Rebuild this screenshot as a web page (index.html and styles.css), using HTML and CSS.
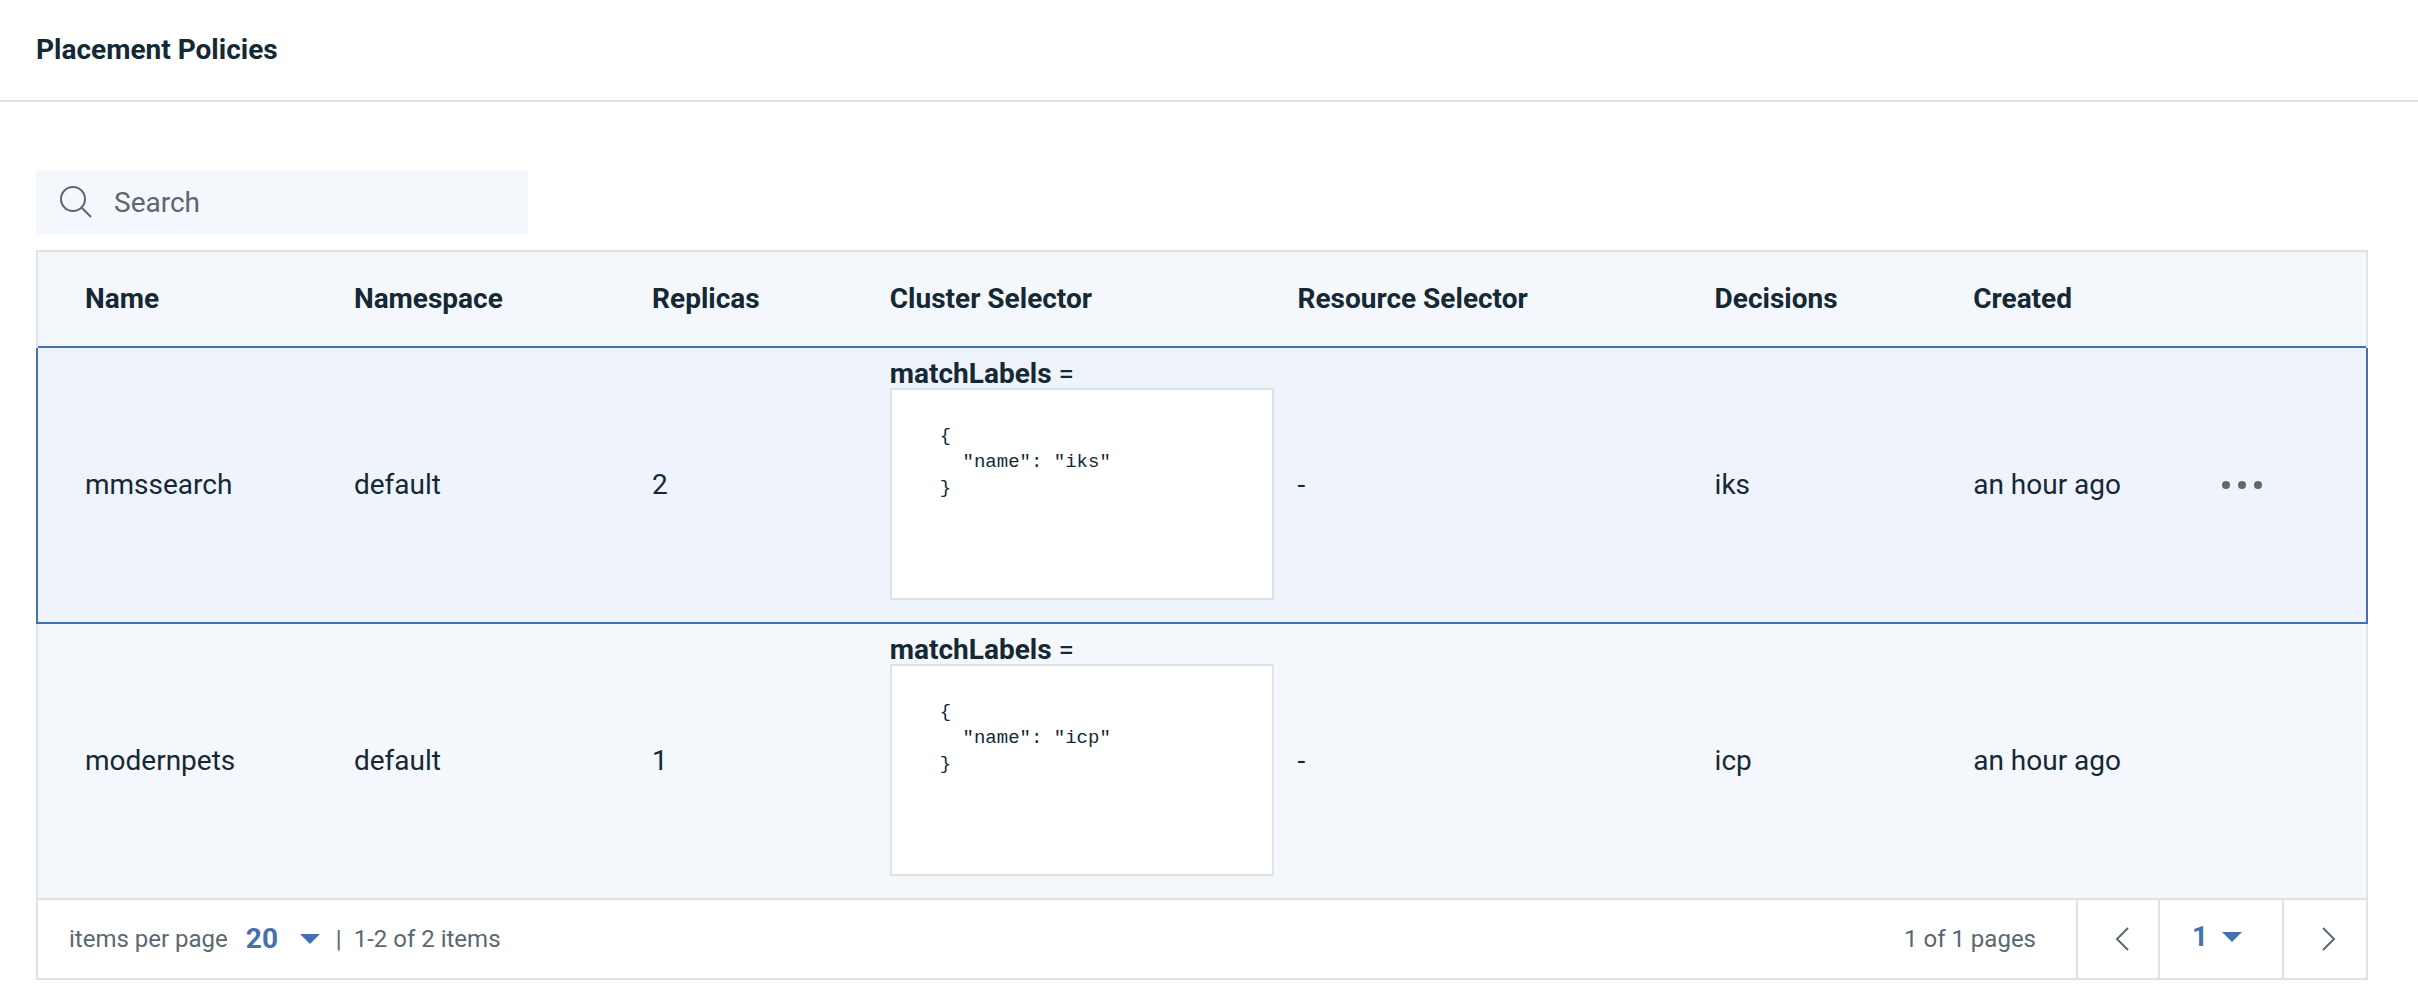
FILE: index.html
```html
<!DOCTYPE html>
<html lang="en">
<head>
<meta charset="utf-8">
<title>Placement Policies</title>
<link rel="stylesheet" href="styles.css">
</head>
<body>
<header class="page-header">
  <h1 class="page-title">Placement Policies</h1>
</header>
<main class="content">
  <label class="search">
    <svg class="search-icon" viewBox="0 0 32 32" aria-hidden="true"><circle cx="13" cy="13" r="12"/><path d="M21.5 21.5 31 31"/></svg>
    <input class="search-input" type="search" placeholder="Search" aria-label="Search">
  </label>
  <table class="table">
    <colgroup>
      <col class="col-name"><col class="col-namespace"><col class="col-replicas"><col class="col-cluster"><col class="col-resource"><col class="col-decisions"><col class="col-created"><col>
    </colgroup>
    <thead>
      <tr>
        <th scope="col">Name</th>
        <th scope="col">Namespace</th>
        <th scope="col">Replicas</th>
        <th scope="col">Cluster Selector</th>
        <th scope="col">Resource Selector</th>
        <th scope="col">Decisions</th>
        <th scope="col">Created</th>
        <td></td>
      </tr>
    </thead>
    <tbody>
      <tr class="active">
        <td>mmssearch</td>
        <td>default</td>
        <td>2</td>
        <td class="selector"><div><b>matchLabels</b> =</div><pre class="code">{
  "name": "iks"
}</pre></td>
        <td>-</td>
        <td>iks</td>
        <td>an hour ago</td>
        <td><button class="overflow" type="button" aria-label="Actions"><svg viewBox="0 0 40 8" aria-hidden="true"><circle cx="4" cy="4" r="4"/><circle cx="20" cy="4" r="4"/><circle cx="36" cy="4" r="4"/></svg></button></td>
      </tr>
      <tr>
        <td>modernpets</td>
        <td>default</td>
        <td>1</td>
        <td class="selector"><div><b>matchLabels</b> =</div><pre class="code">{
  "name": "icp"
}</pre></td>
        <td>-</td>
        <td>icp</td>
        <td>an hour ago</td>
        <td></td>
      </tr>
    </tbody>
  </table>
  <div class="pagination">
    <label for="page-size">items per page</label>
    <span class="select size-select">
      <select id="page-size"><option>20</option></select>
      <svg class="caret" viewBox="0 0 20 10" aria-hidden="true"><path d="M0 0h20L10 10z"/></svg>
    </span>
    <span class="divider">|</span>
    <span>1-2 of 2 items</span>
    <span class="page-count">1 of 1 pages</span>
    <button class="step" type="button" aria-label="Previous page"><svg viewBox="0 0 14 24" aria-hidden="true"><path d="M13 1 2 12l11 11"/></svg></button>
    <span class="select page-select">
      <select aria-label="Page"><option>1</option></select>
      <svg class="caret" viewBox="0 0 20 10" aria-hidden="true"><path d="M0 0h20L10 10z"/></svg>
    </span>
    <button class="step next" type="button" aria-label="Next page"><svg viewBox="0 0 14 24" aria-hidden="true"><path d="m1 1 11 11L1 23"/></svg></button>
  </div>
</main>
</body>
</html>
```
FILE: styles.css
```css
* { box-sizing: border-box; }

body {
  margin: 0;
  background: #fff;
  color: #152935;
  font: 28px/28px Roboto, "Liberation Sans", sans-serif;
}

button, input, select { font: inherit; color: inherit; border: 0; background: none; padding: 0; }

.page-header { padding: 36px; border-bottom: 2px solid #dfe3e6; }
.page-title { margin: 0; font-size: 28px; font-weight: 700; }

.content { padding: 68px 50px 0 36px; }

.search {
  display: flex;
  align-items: center;
  gap: 22px;
  width: 492px;
  max-width: 100%;
  height: 64px;
  padding: 0 24px;
  margin-bottom: 16px;
  background: #f4f7fb;
  color: #5a6872;
}
.search-icon { width: 32px; height: 32px; flex: none; fill: none; stroke: #5a6872; stroke-width: 2; }
.search-input { flex: 1; min-width: 0; outline: 0; appearance: none; }
.search-input::placeholder { color: #5a6872; opacity: 1; }

.table { width: 100%; table-layout: fixed; border-collapse: collapse; }
.col-name { width: 13.6%; }
.col-namespace { width: 12.8%; }
.col-replicas { width: 10.2%; }
.col-cluster { width: 17.5%; }
.col-resource { width: 17.9%; }
.col-decisions { width: 11.1%; }
.col-created { width: 10%; }

.table tr { background: #f4f7fb; border: 2px solid #dfe3e6; }
.table thead tr { border-bottom: 0; height: 96px; }
.table tbody tr { border-top: 0; }
.table tbody .active { background: #eef3fc; border: 2px solid #4470b0; }
.table th { text-align: left; font-weight: 700; }
.table th, .table td { padding: 0 24px 0 0; vertical-align: middle; }
.table th:first-child, .table td:first-child { padding-left: 47px; }
.table .selector { padding: 12px 24px 22px 0; }
.table b { font-weight: 700; }

.code {
  height: 212px;
  margin: 0;
  padding: 33px 48px;
  border: 2px solid #dfe3e6;
  background: #fff;
  font: 19px/26px "Liberation Mono", monospace;
}

.overflow { display: flex; align-items: center; height: 40px; padding: 0 16px; }
.overflow svg { width: 40px; height: 8px; fill: #5a6872; }

.pagination {
  display: flex;
  align-items: center;
  height: 80px;
  padding-left: 31px;
  border: 2px solid #dfe3e6;
  border-top: 0;
  color: #5a6872;
  font-size: 24px;
}

.select { display: grid; align-items: center; color: #4470b0; font-size: 28px; font-weight: 700; }
.select select, .select .caret { grid-area: 1 / 1; }
.select select { appearance: none; height: 100%; width: 100%; }
.caret { width: 20px; height: 10px; fill: #4470b0; justify-self: end; pointer-events: none; }
.size-select { width: 74px; height: 40px; margin: 0 16px 0 18px; }
.divider { margin-right: 12px; }

.page-count { margin-left: auto; margin-right: 40px; }
.step, .page-select { align-self: stretch; border-left: 2px solid #dfe3e6; }
.step { display: flex; align-items: center; justify-content: center; width: 82px; padding-left: 8px; }
.step.next { width: 84px; }
.step svg { width: 14px; height: 24px; fill: none; stroke: #5a6872; stroke-width: 2; }
.page-select { width: 124px; padding-bottom: 4px; }
.page-select select { padding-left: 32px; }
.page-select .caret { margin-right: 40px; }
```
